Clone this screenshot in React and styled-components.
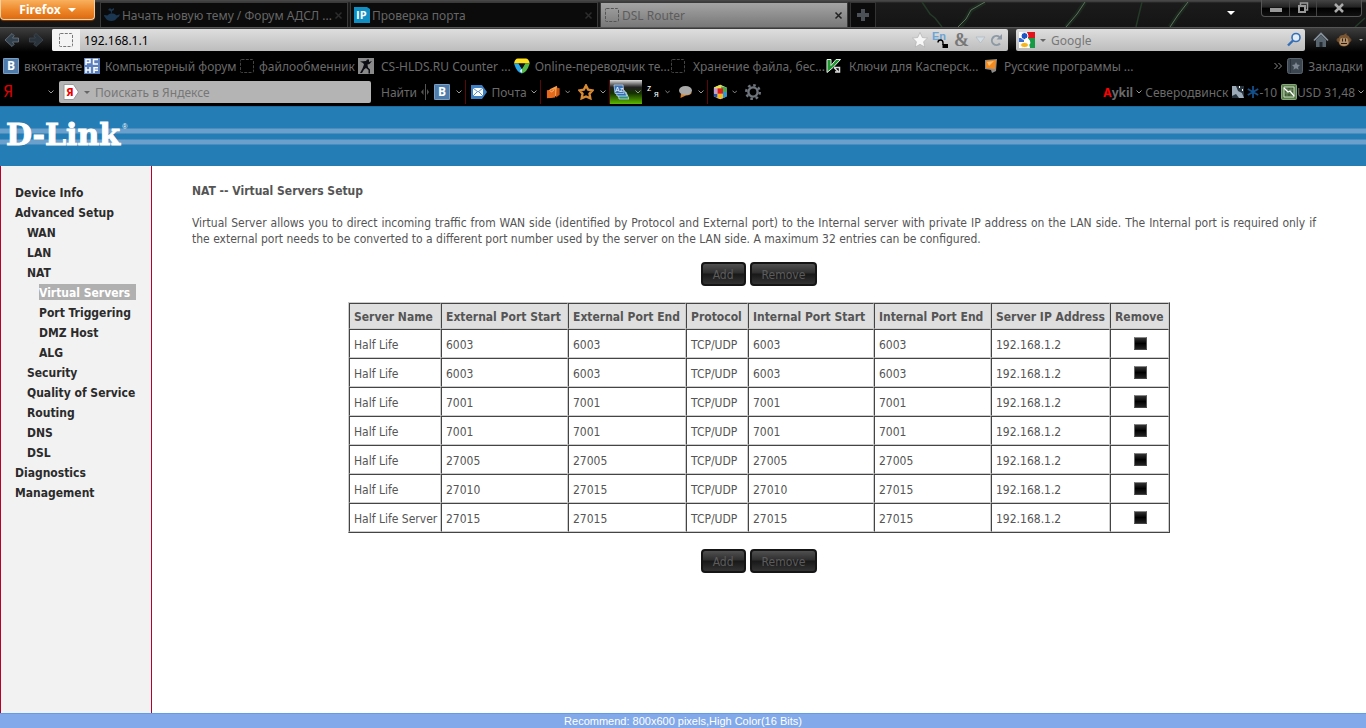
import styled, { createGlobalStyle, css } from "styled-components";

const GlobalStyle = createGlobalStyle`
  * {
    box-sizing: border-box;
  }
  body {
    margin: 0;
    background: #fff;
    font-family: "DejaVu Sans Condensed", "DejaVu Sans", sans-serif;
    font-size: 12px;
    color: #555;
  }
  button, input {
    font: inherit;
    color: inherit;
    margin: 0;
    padding: 0;
    border: 0;
    background: none;
  }
`;

const Window = styled.div`
  min-height: 100vh;
  display: flex;
  flex-direction: column;
`;

/* ---------- browser ---------- */

const Browser = styled.header`
  background: #000;
  color: #6a6a6a;
  font-family: "Noto Sans", sans-serif;
  font-size: 12px;
  line-height: 16px;
  white-space: nowrap;
`;

const TabStrip = styled.div`
  position: relative;
  display: flex;
  align-items: flex-end;
  height: 28px;
  background: linear-gradient(#444 0, #4a4a4a 1px, #1b1b1b 3px, #141414 100%);
  border-bottom: 1px solid #555;
`;

const Lightning = styled.svg`
  position: absolute;
  right: 0;
  top: 2px;
  width: 490px;
  height: 25px;
`;

const FirefoxButton = styled.button`
  align-self: flex-start;
  display: flex;
  align-items: center;
  justify-content: center;
  gap: 7px;
  width: 95px;
  height: 20px;
  margin-right: 5px;
  color: #fff;
  font-weight: bold;
  background: linear-gradient(#f9b05e, #ee8a2c 50%, #dd6a10);
  border: 1px solid #f7cf9c;
  border-top: 0;
  border-radius: 0 0 4px 4px;
  box-shadow: 0 1px 1px #7a3a08;
`;

const Tab = styled.div`
  display: flex;
  align-items: center;
  gap: 2px;
  width: 248px;
  height: 25px;
  margin-right: 2px;
  padding: 0 4px 0 3px;
  border: 1px solid #3a3a3a;
  border-bottom: 0;
  background: ${(p) => (p.$active ? "linear-gradient(#a4a4a4, #787878)" : "#0b0b0b")};
  color: ${(p) => (p.$active ? "#5c5c5c" : "#666")};

  span {
    flex: 1;
    padding-top: 2px;
  }
  button {
    color: ${(p) => (p.$active ? "#222" : "#2c2c2c")};
    display: flex;
  }
`;

const NewTab = styled.button`
  display: flex;
  align-items: center;
  justify-content: center;
  width: 26px;
  height: 25px;
  border: 1px solid #333;
  border-bottom: 0;
  background: #0b0b0b;
`;

const WindowTools = styled.div`
  position: relative;
  align-self: flex-start;
  display: flex;
  align-items: flex-start;
  gap: 26px;
  margin-left: auto;
  padding-right: 4px;

  > svg {
    margin-top: 11px;
  }
`;

const WindowButtons = styled.div`
  display: flex;
  height: 17px;
  border: 1px solid #555;
  border-top: 0;
  border-radius: 0 0 4px 4px;
  background: linear-gradient(#444, #222 45%, #000 50%, #111);

  button {
    display: flex;
    align-items: center;
    justify-content: center;
    width: 27px;
  }
  button + button {
    border-left: 1px solid #444;
  }
  button:last-child {
    width: 45px;
  }
`;

const NavBar = styled.div`
  display: flex;
  align-items: center;
  height: 24px;
  padding-right: 3px;
  background: linear-gradient(#3d3d3d, #000);
`;

const History = styled.div`
  display: flex;
  gap: 8px;
  width: 52px;
  padding-left: 4px;
  button {
    display: flex;
  }
`;

const Field = styled.label`
  display: flex;
  align-items: center;
  height: 22px;
  border-radius: 2px;
  background: linear-gradient(#dedede, #bdbdbd);

  input {
    flex: 1;
    min-width: 0;
    padding-top: 2px;
    outline: 0;
    color: #000;
  }
  input::placeholder {
    color: #777;
    opacity: 1;
  }
`;

const AddressField = styled(Field)`
  flex: 1;
  gap: 4px;
  margin-right: 8px;
  padding-right: 5px;
`;

const SiteIdentity = styled.span`
  display: flex;
  align-items: center;
  justify-content: center;
  width: 28px;
  height: 22px;
  border-radius: 2px 0 0 2px;
  background: #f4f4f4;
`;

const AddressTools = styled.span`
  display: flex;
  align-items: center;
  gap: 4px;
`;

const Ampersand = styled.span`
  width: 16px;
  color: #777;
  font-family: "Liberation Serif", serif;
  font-size: 18px;
  font-weight: bold;
  line-height: 20px;
`;

const SearchField = styled(Field)`
  width: 289px;
  gap: 5px;
  padding: 0 3px;
`;

const NavTools = styled.div`
  display: flex;
  align-items: center;
  gap: 7px;
  padding-left: 8px;
`;

const BookmarksBar = styled.nav`
  display: flex;
  align-items: center;
  height: 28px;
  padding: 0 3px;
`;

const Label = styled.span`
  padding-top: 2px;
  margin-right: ${(p) => p.$after || 0}px;
`;

const Bookmark = styled.a`
  display: flex;
  align-items: center;
  gap: ${(p) => p.$gap || 5}px;
  width: ${(p) => p.$width}px;
  color: inherit;
  text-decoration: none;
`;

const BookmarksMenu = styled.div`
  display: flex;
  align-items: center;
  gap: 5px;
  margin-left: auto;
`;

const YandexBar = styled.div`
  display: flex;
  align-items: center;
  height: 26px;
  padding: 0 2px 2px 3px;
`;

const YandexLogo = styled.button`
  display: flex;
  align-items: center;
  justify-content: space-between;
  width: 51px;
  margin-right: 5px;
  color: #e00000;
  font-family: "DejaVu Sans Condensed", "DejaVu Sans", sans-serif;
  font-size: 16px;
`;

const YandexSearch = styled(Field)`
  width: 312px;
  gap: 5px;
  margin-right: 10px;
  padding: 0 4px;
  background: #b4b4b4;
`;

const Tools = styled.div`
  display: flex;
  align-items: center;
  margin-left: ${(p) => (p.$right ? "auto" : 0)};
`;

const Tool = styled.button`
  display: flex;
  align-items: center;
  justify-content: space-between;
  gap: 4px;
  width: ${(p) => p.$width}px;
  height: 24px;
  padding: 0 3px 0 5px;
  ${(p) =>
    p.$separated &&
    css`
      border-right: 1px solid #5a0808;
    `}
  ${(p) =>
    p.$lit &&
    css`
      padding: 0 1px 0 3px;
      background: linear-gradient(#ddd, #222 30%, #143000 55%, #5db800);
    `}
`;

const User = styled.b`
  padding-top: 2px;
  margin-right: 3px;
  &::first-letter {
    color: #f00;
  }
`;

/* ---------- router page ---------- */

const Banner = styled.div`
  display: flex;
  align-items: center;
  height: 60px;
  padding-left: 6px;
  border-top: 1px solid #1d6a9b;
  background: linear-gradient(
    #247db4 21px,
    #6ba0cc 22px,
    #6ba0cc 26px,
    #247db4 27px,
    #247db4 32px,
    #6ba0cc 33px,
    #6ba0cc 37px,
    #247db4 38px
  );
`;

const Logo = styled.a`
  display: flex;
  align-items: flex-start;
  height: 28px;
  color: #fff;
  font-family: "DejaVu Serif", serif;
  font-size: 30px;
  font-weight: bold;
  line-height: 24px;
  text-decoration: none;
  -webkit-text-stroke: 1px #fff;

  sup {
    margin-left: 2px;
    font-family: "Liberation Sans", sans-serif;
    font-size: 7px;
    line-height: 8px;
    font-weight: normal;
    -webkit-text-stroke: 0;
  }
`;

const Body = styled.div`
  flex: 1;
  display: flex;
`;

const Sidebar = styled.nav`
  width: 152px;
  flex-shrink: 0;
  padding: 16px 0 16px 14px;
  border: solid #b8002c;
  border-width: 0 1px;
  background: #f2f2f2;
`;

const MenuItem = styled.div`
  display: flex;
  align-items: center;
  height: 20px;
  padding-left: ${(p) => p.$level * 12}px;

  a {
    padding: 2px 6px 0 0;
    color: ${(p) => (p.$current ? "#fff" : "#2b2b2b")};
    background: ${(p) => (p.$current ? "#b0b0b0" : "none")};
    font-weight: bold;
    line-height: 14px;
    white-space: nowrap;
    text-decoration: none;
  }
`;

const Content = styled.main`
  flex: 1;
  padding: 17px 40px 16px;
`;

const Title = styled.h1`
  margin: 0 0 16px;
  font-size: 12px;
  line-height: 16px;
`;

const Intro = styled.p`
  margin: 0;
  padding-right: 10px;
  line-height: 16px;
  text-align: justify;
`;

const Actions = styled.div`
  display: flex;
  justify-content: center;
  gap: 4px;
  margin: ${(p) => p.$top}px 0 16px;
`;

const ActionButton = styled.button`
  height: 24px;
  padding: 2px 10px 0;
  border: 2px solid #151515;
  border-radius: 4px;
  background: linear-gradient(#505050, #2e2e2e 45%, #181818 50%, #333);
  color: #5c5c5c;
`;

const ServerTable = styled.table`
  width: 822px;
  margin: 0 auto;
  table-layout: fixed;
  border-collapse: separate;
  border-spacing: 0;
  border: 1px solid;
  border-color: #ccc #444 #444 #ccc;

  th,
  td {
    height: 29px;
    padding: 2px 4px 0;
    border: 1px solid;
    border-color: #444 #ccc #ccc #444;
    text-align: left;
    white-space: nowrap;
  }
  th {
    height: 26px;
    padding-right: 3px;
    background: #dfdfdf;
  }
  td:last-child {
    padding: 0 2px 2px 4px;
    text-align: center;
  }
`;

const RemoveBox = styled.input`
  appearance: none;
  display: inline-block;
  width: 13px;
  height: 13px;
  vertical-align: middle;
  border: 1px solid #777;
  border-color: #888 #555 #444 #666;
  background: linear-gradient(#333, #000 50%, #222);
`;

const Footer = styled.footer`
  height: 15px;
  border-top: 1px solid #5f9cf0;
  background: #82aaea;
  color: #fff;
  font-family: "Liberation Sans", sans-serif;
  font-size: 11px;
  line-height: 15px;
  text-align: center;
`;

/* ---------- icons ---------- */

const Svg = ({ size = 16, w, children }) => (
  <svg width={w || size} height={size} viewBox={`0 0 ${w || size} ${size}`} fill="none" aria-hidden="true">
    {children}
  </svg>
);

const Chevron = () => (
  <svg width="6" height="4" viewBox="0 0 6 4" fill="none" aria-hidden="true">
    <path d="M.5.5 3 3 5.500.5" stroke="#999" />
  </svg>
);

const Triangle = ({ color = "#666", size = 6 }) => (
  <svg width={size} height={size / 2} viewBox="0 0 6 3" aria-hidden="true">
    <path d="M0 0h6L3 3z" fill={color} />
  </svg>
);

const CloseIcon = () => (
  <Svg size={9}>
    <path d="m1.500 1.500 6 6m0-6-6 6" stroke="currentColor" strokeWidth="1.500" />
  </Svg>
);

const BlankIcon = ({ color = "#666" }) => (
  <Svg>
    <rect x="1.500" y="1.500" width="13" height="13" rx="1" stroke={color} strokeDasharray="3 1.300" />
  </Svg>
);

const WhaleIcon = () => (
  <Svg>
    <path d="M0 8c2 0 3 1 4 0 2-2 6-2 8 0 1 .5 3 0 4-1-.5 3-2 3.500-3 4-1 2-3 3-5.500 3-3 0-5-1-6-3C.5 10 0 9 0 8zM8 7 6.500 4 4 3l2-2 1.500 1.500L10 1v2L8 4z" fill="#1b3650" />
  </Svg>
);

const IpIcon = () => (
  <Svg>
    <path d="M0 0h13l3 2v14H0z" fill="#0f8fc4" />
    <text x="2" y="12" fill="#fff" fontSize="11" fontWeight="bold" fontFamily="Open Sans, sans-serif">IP</text>
  </Svg>
);

const ArrowIcon = ({ flip, color, edge }) => (
  <Svg>
    <path
      d="M1 8 8 1.500l2.200 2.200L8.500 6H14.500v4h-6l1.700 2.300L8 14.500z"
      fill={color}
      stroke={edge}
      strokeWidth=".8"
      transform={flip ? "matrix(-1 0 0 1 16 0)" : undefined}
    />
  </Svg>
);

const StarIcon = () => (
  <Svg>
    <path d="m8 .5 2.300 5 5.200.6-3.900 3.600 1.100 5.300L8 12.300 3.300 15l1.100-5.300L.5 6.100l5.200-.6z" fill="#f7f7f7" stroke="#aaa" strokeWidth=".6" />
  </Svg>
);

const LayoutIcon = () => (
  <Svg size={18}>
    <text x="0" y="9" fill="#6da5d4" fontSize="11" fontWeight="bold" fontFamily="Liberation Sans, sans-serif">En</text>
    <path d="M6 11.500C6 9.500 7 9 8.500 9S11 9.500 11 12v2" stroke="#000" strokeWidth="1.400" />
    <path d="M10.500 13H16v4h-5.500z" fill="#000" />
  </Svg>
);

const ReloadIcon = () => (
  <Svg w={13}>
    <path d="M9.500 5A4.600 4.600 0 1 0 10 11.500" stroke="#8d9aa6" strokeWidth="2" />
    <path d="M12 2v5.500H6.500z" fill="#8d9aa6" />
  </Svg>
);

const GoogleIcon = () => (
  <Svg>
    <rect width="16" height="16" fill="#fff" />
    <path d="M8 0h8v6H9z" fill="#e2131b" />
    <path d="M9 6h7v10h-5z" fill="#169a43" />
    <path d="M0 6h5v4H0z" fill="#3a6fd0" />
    <circle cx="5.500" cy="4" r="3.500" fill="#1d55c4" stroke="#fff" />
    <path d="M6.500 7c3.500 1 4.500 3 3 5" stroke="#fff" strokeWidth="2.400" />
    <ellipse cx="5.500" cy="13" rx="4" ry="2.600" fill="#f5b417" stroke="#fff" />
  </Svg>
);

const MagnifierIcon = () => (
  <Svg>
    <circle cx="10" cy="5.500" r="4" stroke="#3470b8" strokeWidth="1.600" fill="#e4ecf5" />
    <path d="M7 8.500 2 13.500" stroke="#3470b8" strokeWidth="2.400" />
  </Svg>
);

const HomeIcon = () => (
  <Svg>
    <path d="M3 8v7h10V8L8 3z" fill="#58656f" />
    <path d="M1 8.500 8 1.500l7 7" stroke="#8894a0" strokeWidth="1.600" />
    <path d="M6.500 10h3v5h-3z" fill="#252d34" />
  </Svg>
);

const MonkeyIcon = () => (
  <Svg>
    <circle cx="2.500" cy="8" r="2" fill="#6b4a2c" />
    <circle cx="13.500" cy="8" r="2" fill="#6b4a2c" />
    <path d="M2.500 8c0-4 2-5 5-5l3-2v2c3 1 3.500 2.500 3.500 5s-1 6.500-6 6.500S2.500 11 2.500 8z" fill="#7a5532" />
    <path d="M4 8c0-2 3-3 4-1.500C9 5 12 6 12 8s1 1 .5 3-2.500 3-4.500 3-4-1-4.500-3S4 10 4 8z" fill="#b3906a" />
    <path d="M6.500 6.500v3M9.500 6.500v3M5 11.500h6" stroke="#2a1c10" />
  </Svg>
);

const VkIcon = () => (
  <Svg>
    <rect width="16" height="16" rx="1" fill="#4f7caa" />
    <rect x=".5" y=".5" width="15" height="15" rx="1" stroke="#7aa0c6" />
    <text x="4" y="12" fill="#fff" fontSize="12" fontWeight="bold" fontFamily="Open Sans, sans-serif">В</text>
  </Svg>
);

const PcIcon = () => (
  <Svg>
    <rect width="16" height="16" fill="#5d80bf" />
    <g stroke="#fff" strokeWidth="1.500">
      <path d="M2 7V1.500h4v3H2M14 1.500H9.500v4.500H14M2 9v6M6 9v6M2 12h4M10 15V9.800h4M10 12.300h4" />
    </g>
  </Svg>
);

const CounterIcon = () => (
  <Svg>
    <rect width="16" height="16" fill="#8a8a8a" />
    <path d="M2 3.500 8 3l1-1.500h2V4l3-1-2.500 3-2 .5.5 3 2 2v4h-1.500v-3.500L8 10l-2 1.500L4 15H2l2.500-4.500L6 6.500 5 5z" fill="#0c0c14" />
  </Svg>
);

const TranslatorIcon = () => (
  <Svg>
    <path d="M4 .5h8q3 0 4 5H0q1-5 4-5z" fill="#ffe01b" />
    <path d="M0 5.500h5L8 11v4.500Q3 15 0 5.500z" fill="#28a9e8" />
    <path d="M16 5.500h-5L8 11v4.500Q13 15 16 5.500z" fill="#54b948" />
    <path d="M4.500 5.500h7L8 11z" fill="#111" />
    <path d="m6 13 2-2.500V15z" fill="#fff" />
  </Svg>
);

const KasperskyIcon = () => (
  <Svg>
    <path d="M1 1.500h4v6l5-6h4.500L7 9.500 1 14.500z" fill="#1c9a2e" stroke="#eee" />
    <path d="M8 9.500h5.500v4.500H9M8 9.500l4 4" stroke="#ddd" strokeWidth="1.500" />
  </Svg>
);

const ProgramsIcon = () => (
  <Svg>
    <path d="M2 2 14 1 13 13 9 15 8 12 2 11z" fill="#8b8b8b" />
    <path d="M3 3 13 2l-1 9-9-1z" fill="#f28a1e" />
    <path d="m4 4 7-1-5 5z" fill="#fcc070" />
  </Svg>
);

const BookmarksIcon = () => (
  <Svg>
    <rect x=".5" y=".5" width="15" height="15" rx="2" fill="#3c4650" stroke="#59646e" />
    <path d="M3.500 1v14" stroke="#2a323a" />
    <path d="m9 4 1.200 2.600 2.800.3-2 2 .6 2.800L9 10.300l-2.600 1.400.6-2.800-2-2 2.800-.3z" fill="#7d8894" />
  </Svg>
);

const YaIcon = () => (
  <Svg>
    <path d="M1 .5h9.500l5 7.500-5 7.500H1z" fill="#fff" stroke="#999" />
    <text x="3" y="12" fill="#e00" fontSize="11" fontWeight="bold" fontFamily="DejaVu Sans Condensed, sans-serif">Я</text>
  </Svg>
);

const SplitterIcon = () => (
  <Svg w={8}>
    <path d="M4.500 0v16" stroke="#555" />
    <path d="M2.500 5v6L0 8zM6 5v6l2-3z" fill="#555" />
  </Svg>
);

const MailIcon = () => (
  <Svg>
    <path d="M0 1h11l5 7-5 7H0z" fill="#3f7fc4" />
    <path d="M2 4h10v8H2z" fill="#fff" />
    <path d="m2 4 5 4 5-4M2 12l4-4m6 4L8 8" stroke="#5b8fc9" />
  </Svg>
);

const CardsIcon = () => (
  <Svg>
    <path d="m4 5 8-4v11l-8 3z" fill="#f7a04a" />
    <path d="m1 6 9-1v9l-9 1z" fill="#e56a1e" />
    <path d="m4 6 2 2 3-2.500" stroke="#fbc48c" />
    <path d="m12 3 3 1v7l-4 3z" fill="#c9520f" />
  </Svg>
);

const OutlineStarIcon = () => (
  <Svg>
    <path d="m8 1.500 2.200 4.200 4.300.7-3 3.200.8 4.700L8 12.500l-4.300 1.800.8-4.700-3-3.200 4.300-.7z" stroke="#d88a33" strokeWidth="2.400" />
  </Svg>
);

const DictionaryIcon = () => (
  <Svg>
    <path d="M5 8h8l3 7H6z" fill="#2f8f83" stroke="#def" strokeWidth=".7" />
    <path d="M3 6h8l3 6H4z" fill="#2f6fb0" stroke="#def" strokeWidth=".7" />
    <path d="M1 1h9l1 8.500H2z" fill="#3973b8" stroke="#cde" strokeWidth=".7" />
    <text x="2" y="8" fill="#fff" fontSize="7" fontFamily="Liberation Sans, sans-serif">Az</text>
  </Svg>
);

const SwitcherIcon = () => (
  <Svg>
    <text x="0" y="7" fill="#fff" fontSize="10" fontFamily="Liberation Sans, sans-serif">z</text>
    <text x="8" y="14" fill="#fff" fontSize="10" fontFamily="Liberation Sans, sans-serif">я</text>
  </Svg>
);

const ChatIcon = () => (
  <Svg>
    <path d="M3 9.500 2.500 14 8 11.500c3 0 5-1 6-3" fill="#d98224" />
    <ellipse cx="7.500" cy="6.500" rx="6.500" ry="4.500" fill="#a9a9a9" />
  </Svg>
);

const CubeIcon = () => (
  <Svg>
    <path d="M1 3 8 0l7 3v10l-7 3-7-3z" fill="#e8c9a0" />
    <path d="M1 3 8 0l3 2-7 3z" fill="#dfe24a" />
    <path d="m9 2 6 1v5H9z" fill="#3fae49" />
    <path d="M1 4h4v5H1z" fill="#c49ad8" />
    <path d="M1 10h4v4l-4-1z" fill="#2450b0" />
    <path d="M11 8h4v5l-4 2z" fill="#2898d8" />
    <path d="M5 4h6v6H5z" fill="#e21a1a" />
    <path d="M5 10h6v5H5z" fill="#f3b91f" />
  </Svg>
);

const GearIcon = () => (
  <Svg>
    <circle cx="8" cy="8" r="4.600" stroke="#6f757d" strokeWidth="2.400" />
    <circle cx="8" cy="8" r="6.800" stroke="#6f757d" strokeWidth="2.400" strokeDasharray="2.600 2.740" />
  </Svg>
);

const WeatherIcon = () => (
  <Svg w={12}>
    <path d="M0 2h12v12H0z" fill="#27333d" />
    <path d="M0 2h4l2 5 4 2 2 5H7L4 10 0 12z" fill="#9aa9b5" />
    <path d="M7 2h1v2H7zM10 5h1v2h-1z" fill="#fff" />
  </Svg>
);

const SnowIcon = () => (
  <Svg w={12}>
    <path d="M6 2v12M.800 5l10.400 6M11.200 5 .8 11" stroke="#14508c" strokeWidth="1.800" />
  </Svg>
);

const ChartIcon = () => (
  <Svg>
    <rect x=".5" y=".5" width="15" height="15" rx="1" fill="#5d8050" stroke="#86a877" />
    <path d="M3 3v10h10V3z" fill="#3f5c35" stroke="#cfe0c4" />
    <path d="M3 6h10M3 9h10M6 3v10M10 3v10" stroke="#8aa87c" strokeWidth=".6" />
    <path d="m3 4 4 4 2-1 4 5" stroke="#fff" strokeWidth="1.300" />
  </Svg>
);

/* ---------- data ---------- */

const bookmarks = [
  { title: "вконтакте", icon: <VkIcon />, width: 81 },
  { title: "Компьютерный форум", icon: <PcIcon />, width: 155 },
  { title: "файлообменник", icon: <BlankIcon color="#444" />, width: 119, gap: 4 },
  { title: "CS-HLDS.RU Counter ...", icon: <CounterIcon />, width: 156, gap: 7 },
  { title: "Online-переводчик те...", icon: <TranslatorIcon />, width: 156 },
  { title: "Хранение файла, бес...", icon: <BlankIcon color="#444" />, width: 156, gap: 7 },
  { title: "Ключи для Касперск...", icon: <KasperskyIcon />, width: 157, gap: 7 },
  { title: "Русские программы ...", icon: <ProgramsIcon />, width: 156 },
];

const menu = [
  ["Device Info", 0],
  ["Advanced Setup", 0],
  ["WAN", 1],
  ["LAN", 1],
  ["NAT", 1],
  ["Virtual Servers", 2],
  ["Port Triggering", 2],
  ["DMZ Host", 2],
  ["ALG", 2],
  ["Security", 1],
  ["Quality of Service", 1],
  ["Routing", 1],
  ["DNS", 1],
  ["DSL", 1],
  ["Diagnostics", 0],
  ["Management", 0],
];

const columns = [
  ["Server Name", 92],
  ["External Port Start", 127],
  ["External Port End", 118],
  ["Protocol", 62],
  ["Internal Port Start", 126],
  ["Internal Port End", 117],
  ["Server IP Address", 119],
  ["Remove", 59],
];

const servers = [
  ["Half Life", 6003, 6003],
  ["Half Life", 6003, 6003],
  ["Half Life", 7001, 7001],
  ["Half Life", 7001, 7001],
  ["Half Life", 27005, 27005],
  ["Half Life", 27010, 27015],
  ["Half Life Server", 27015, 27015],
];

/* ---------- components ---------- */

function Tabs() {
  return (
    <TabStrip>
      <Lightning viewBox="0 0 490 25" fill="none">
        <g stroke="#1d3320" strokeWidth="5" opacity=".5">
          <path d="M109 0 95 8l-5 9-6 8M209 0l-8 12-11 13M312 0l-10 13-8 12" />
        </g>
        <path d="M46 0l8 12 5 4 7 9M266 0l-3 12-3 13M489 16l-10 9" stroke="#243a27" strokeWidth="1.500" />
        <path d="M109 0 95 8l-5 9-8 8M209 0l-8 12-11 13M312 0l-10 13-8 12" stroke="#5f705f" />
      </Lightning>
      <FirefoxButton>
        Firefox <Triangle color="#fff" size={8} />
      </FirefoxButton>
      <Tab>
        <WhaleIcon />
        <span>Начать новую тему / Форум АДСЛ ...</span>
        <button aria-label="Close tab">
          <CloseIcon />
        </button>
      </Tab>
      <Tab>
        <IpIcon />
        <span>Проверка порта</span>
        <button aria-label="Close tab">
          <CloseIcon />
        </button>
      </Tab>
      <Tab $active>
        <BlankIcon color="#555" />
        <span>DSL Router</span>
        <button aria-label="Close tab">
          <CloseIcon />
        </button>
      </Tab>
      <NewTab aria-label="New tab">
        <Svg size={12}>
          <path d="M6 0v12M0 6h12" stroke="#4b5157" strokeWidth="4" />
        </Svg>
      </NewTab>
      <WindowTools>
        <Triangle color="#fff" size={8} />
        <WindowButtons>
          <button aria-label="Minimize">
            <Svg size={12}>
              <path d="M0 6h12v4H0z" fill="#999" />
            </Svg>
          </button>
          <button aria-label="Restore">
            <Svg size={12}>
              <path d="M3.500 3V1h7v7H9" stroke="#999" strokeWidth="1.500" />
              <path d="M2 4h6v6H2z" stroke="#999" strokeWidth="2" />
            </Svg>
          </button>
          <button aria-label="Close">
            <Svg size={12}>
              <path d="m2 2 8 8m0-8-8 8" stroke="#aaa" strokeWidth="2.500" />
            </Svg>
          </button>
        </WindowButtons>
      </WindowTools>
    </TabStrip>
  );
}

function Navigation() {
  return (
    <NavBar>
      <History>
        <button aria-label="Back">
          <ArrowIcon color="#33414f" edge="#6c7985" />
        </button>
        <button aria-label="Forward">
          <ArrowIcon flip color="#2a333b" edge="#3f4a54" />
        </button>
      </History>
      <AddressField>
        <SiteIdentity>
          <BlankIcon color="#777" />
        </SiteIdentity>
        <input aria-label="Address" defaultValue="192.168.1.1" />
        <AddressTools>
          <StarIcon />
          <LayoutIcon />
          <Ampersand>&amp;</Ampersand>
          <Svg size={12}>
            <path d="M2 3h9l-4.500 6z" fill="#d5dde4" stroke="#a9b3bc" strokeWidth=".6" />
          </Svg>
          <ReloadIcon />
        </AddressTools>
      </AddressField>
      <SearchField>
        <GoogleIcon />
        <Triangle />
        <input aria-label="Search" placeholder="Google" />
        <MagnifierIcon />
      </SearchField>
      <NavTools>
        <HomeIcon />
        <MonkeyIcon />
        <Triangle color="#aaa" size={4} />
      </NavTools>
    </NavBar>
  );
}

function Bookmarks() {
  return (
    <BookmarksBar>
      {bookmarks.map((b) => (
        <Bookmark key={b.title} href="#" $width={b.width} $gap={b.gap}>
          {b.icon}
          <Label>{b.title}</Label>
        </Bookmark>
      ))}
      <BookmarksMenu>
        <Svg size={8}>
          <path d="m.5 1 3 3-3 3m4-6 3 3-3 3" stroke="#888" />
        </Svg>
        <BookmarksIcon />
        <Label>Закладки</Label>
      </BookmarksMenu>
    </BookmarksBar>
  );
}

function YandexToolbar() {
  return (
    <YandexBar>
      <YandexLogo>
        Я <Chevron />
      </YandexLogo>
      <YandexSearch>
        <YaIcon />
        <Triangle />
        <input aria-label="Yandex" placeholder="Поискать в Яндексе" />
      </YandexSearch>
      <Tools>
        <Label $after={4}>Найти</Label>
        <SplitterIcon />
        <Tool $width={37} $separated>
          <VkIcon />
          <Chevron />
        </Tool>
        <Tool $width={75} $separated>
          <MailIcon />
          <Label>Почта</Label>
          <Chevron />
        </Tool>
        <Tool $width={32}>
          <CardsIcon />
          <Chevron />
        </Tool>
        <Tool $width={37} $separated>
          <OutlineStarIcon />
          <Chevron />
        </Tool>
        <Tool $width={32} $lit>
          <DictionaryIcon />
          <Chevron />
        </Tool>
        <Tool $width={31}>
          <SwitcherIcon />
          <Chevron />
        </Tool>
        <Tool $width={35} $separated>
          <ChatIcon />
          <Chevron />
        </Tool>
        <Tool $width={32}>
          <CubeIcon />
          <Chevron />
        </Tool>
        <Tool $width={24} aria-label="Settings">
          <GearIcon />
        </Tool>
      </Tools>
      <Tools $right>
        <User>Aykil</User>
        <Chevron />
        <Label $after={4}>&nbsp;Северодвинск</Label>
        <WeatherIcon />
        &nbsp;
        <SnowIcon />
        <Label $after={4}>-10</Label>
        <ChartIcon />
        <Label $after={3}>USD 31,48</Label>
        <Chevron />
      </Tools>
    </YandexBar>
  );
}

function ServerActions({ top }) {
  return (
    <Actions $top={top}>
      <ActionButton>Add</ActionButton>
      <ActionButton>Remove</ActionButton>
    </Actions>
  );
}

function VirtualServers() {
  return (
    <Content>
      <Title>NAT -- Virtual Servers Setup</Title>
      <Intro>
        Virtual Server allows you to direct incoming traffic from WAN side
        (identified by Protocol and External port) to the Internal server with
        private IP address on the LAN side. The Internal port is required only
        if the external port needs to be converted to a different port number
        used by the server on the LAN side. A maximum 32 entries can be
        configured.
      </Intro>
      <ServerActions top={15} />
      <ServerTable>
        <colgroup>
          {columns.map(([name, width]) => (
            <col key={name} style={{ width }} />
          ))}
        </colgroup>
        <thead>
          <tr>
            {columns.map(([name]) => (
              <th key={name}>{name}</th>
            ))}
          </tr>
        </thead>
        <tbody>
          {servers.map(([name, start, end], i) => (
            <tr key={i}>
              <td>{name}</td>
              <td>{start}</td>
              <td>{end}</td>
              <td>TCP/UDP</td>
              <td>{start}</td>
              <td>{end}</td>
              <td>192.168.1.2</td>
              <td>
                <RemoveBox type="checkbox" aria-label={`Remove ${name} ${start}`} />
              </td>
            </tr>
          ))}
        </tbody>
      </ServerTable>
      <ServerActions top={16} />
    </Content>
  );
}

export default function App() {
  return (
    <Window>
      <GlobalStyle />
      <Browser>
        <Tabs />
        <Navigation />
        <Bookmarks />
        <YandexToolbar />
      </Browser>
      <Banner>
        <Logo href="#">
          D-Link<sup>®</sup>
        </Logo>
      </Banner>
      <Body>
        <Sidebar>
          {menu.map(([name, level]) => (
            <MenuItem key={name} $level={level} $current={name === "Virtual Servers"}>
              <a href="#">{name}</a>
            </MenuItem>
          ))}
        </Sidebar>
        <VirtualServers />
      </Body>
      <Footer>Recommend: 800x600 pixels,High Color(16 Bits)</Footer>
    </Window>
  );
}
